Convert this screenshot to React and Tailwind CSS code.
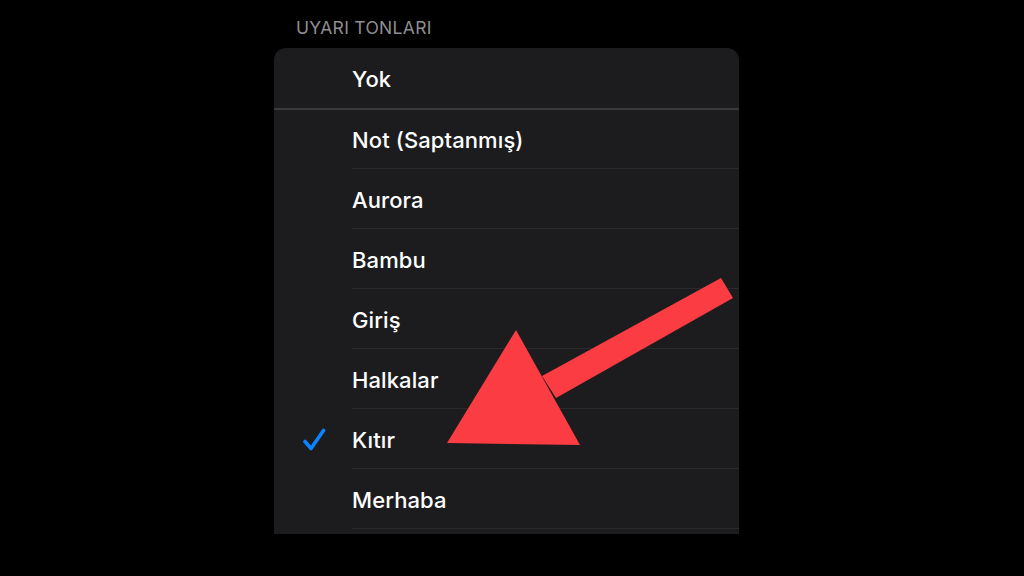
import React from 'react';

const TONES = ['Not (Saptanmış)', 'Aurora', 'Bambu', 'Giriş', 'Halkalar', 'Kıtır', 'Merhaba'];
const SELECTED = 'Kıtır';

function Check() {
  return (
    <svg width="24" height="24" viewBox="0 0 24 24" fill="none">
      <path d="M3 13.5l6 7L21.5 2.5" stroke="#0a84ff" strokeWidth="3.6" strokeLinecap="round" strokeLinejoin="round" />
    </svg>
  );
}

function Row({ label, selected }) {
  return (
    <div className="flex h-[60px] shrink-0">
      <div className="w-[78px] flex items-center justify-center pl-[2px] pt-[2px]">
        {selected && <Check />}
      </div>
      <div className="flex-1 flex items-center border-b border-[#2a2a2c] pt-[4px]">
        <span className="text-[22px] font-medium text-white tracking-[0.1px]">{label}</span>
      </div>
    </div>
  );
}

export default function App() {
  return (
    <div className="relative w-[1024px] h-[576px] bg-black overflow-hidden" style={{ fontFamily: 'Inter, "Noto Sans", sans-serif' }}>
      <div className="ml-[274px] w-[465px] pt-[18px]">
        <div className="pl-[22px] text-[17.5px] text-[#8e8e93] tracking-[0.3px] leading-5 h-[30px]">UYARI TONLARI</div>
        <div className="bg-[#1c1c1e] rounded-t-[12px] h-[486px] overflow-hidden flex flex-col">
          <div className="flex h-[60px] shrink-0 items-center pl-[78px] pt-[2px]">
            <span className="text-[22px] font-medium text-white">Yok</span>
          </div>
          <div className="h-[2px] bg-[#3a3a3c] shrink-0" />
          <div className="flex flex-col -mt-[1px]">
            {TONES.map((t) => (
              <Row key={t} label={t} selected={t === SELECTED} />
            ))}
          </div>
        </div>
      </div>

      <svg className="absolute inset-0 pointer-events-none" width="1024" height="576" viewBox="0 0 1024 576">
        <polygon points="447,443 516,330 580,445" fill="#fb3c42" />
        <polygon points="721,278 733,298 556,398 542,376" fill="#fb3c42" />
      </svg>
    </div>
  );
}
